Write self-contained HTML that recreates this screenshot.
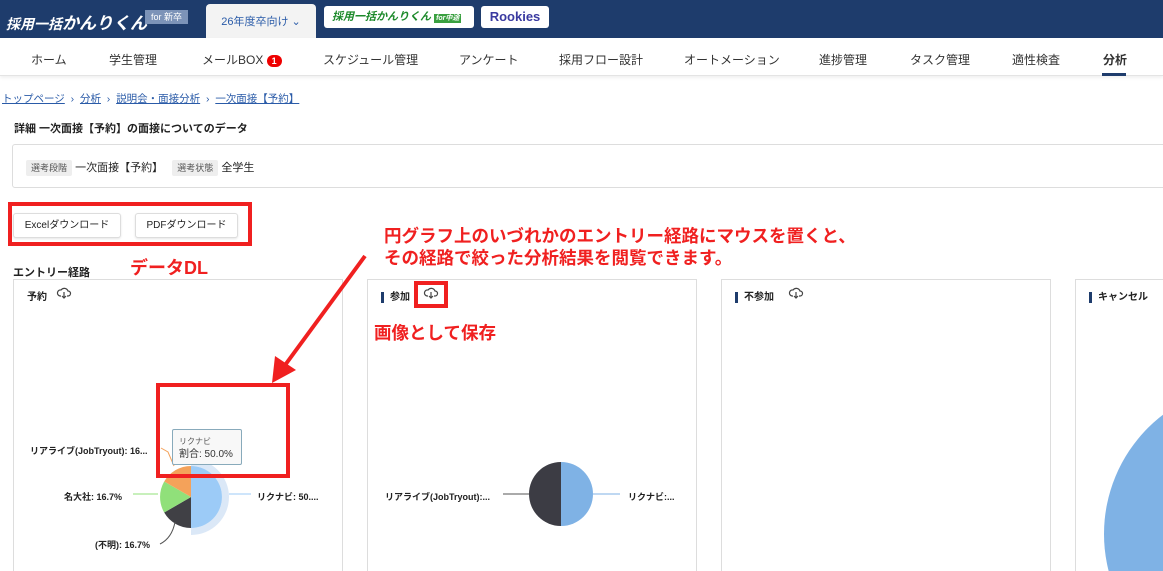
<!DOCTYPE html><html><head><meta charset="utf-8"><style>
*{box-sizing:border-box;margin:0;padding:0}
body{width:1163px;height:571px;overflow:hidden;background:#fff;font-family:"Liberation Sans","Noto Sans CJK JP",sans-serif;color:#222;position:relative}
.abs{position:absolute}
.hdr{left:0;top:0;width:1163px;height:38px;background:#1e3c6c}
.nav{left:0;top:38px;width:1163px;height:38px;background:#fff;border-bottom:1px solid #e4e4e4;box-shadow:0 2px 3px rgba(0,0,0,.06)}
.nav span{position:absolute;top:13px;font-size:12px;color:#333}
.card{border:1px solid #ddd;border-bottom:none;background:#fff}
.red{color:#f02020;font-weight:bold}
.btn{border:1px solid #ddd;border-radius:3px;font-size:10px;text-align:center;line-height:24px;background:#fff;box-shadow:0 1px 2px rgba(0,0,0,.1)}
.tag{background:#eee;font-size:9px;color:#555;padding:3px 5px;border-radius:2px}
.lbl{font-size:9px;font-weight:bold;color:#222}
</style></head><body>
<div class="abs hdr"></div>
<div class="abs" style="left:6px;top:9px;color:#fff;font-weight:bold;font-style:italic;font-size:14px;white-space:nowrap">採用一括<span style="font-size:17px">かんりくん</span></div>
<div class="abs" style="left:145px;top:10px;width:43px;height:14px;background:#7c93b8;color:#fff;font-size:9px;text-align:center;line-height:14px">for 新卒</div>
<div class="abs" style="left:206px;top:4px;width:110px;height:35px;background:#f3f3f3;border-radius:4px 4px 0 0;font-size:11px;color:#2a5ba8;text-align:center;line-height:36px">26年度卒向け ⌄</div>
<div class="abs" style="left:324px;top:6px;width:150px;height:22px;background:#fff;border-radius:3px;color:#1d8a2b;font-weight:bold;font-style:italic;font-size:11px;line-height:22px;padding-left:8px">採用一括かんりくん <span style="background:#3aa040;color:#fff;font-size:7px;padding:1px 2px">for中途</span></div>
<div class="abs" style="left:481px;top:6px;width:68px;height:22px;background:#fff;border-radius:3px;color:#3a3aa0;font-weight:bold;font-size:13px;text-align:center;line-height:22px">Rookies</div>
<div class="abs nav">
<span style="left:31px">ホーム</span><span style="left:109px">学生管理</span><span style="left:202px">メールBOX <b style="display:inline-block;width:15px;height:12px;border-radius:6px;background:#e00;color:#fff;font-size:9px;text-align:center;line-height:12px">1</b></span><span style="left:323px">スケジュール管理</span><span style="left:459px">アンケート</span><span style="left:559px">採用フロー設計</span><span style="left:684px">オートメーション</span><span style="left:819px">進捗管理</span><span style="left:910px">タスク管理</span><span style="left:1012px">適性検査</span><span style="left:1103px;font-weight:bold">分析</span>
<div class="abs" style="left:1102px;top:35px;width:24px;height:3px;background:#1e3c6c"></div>
</div>
<div class="abs" style="left:2px;top:91px;font-size:10.5px;color:#2a5ba8;white-space:nowrap"><u>トップページ</u> &nbsp;›&nbsp; <u>分析</u> &nbsp;›&nbsp; <u>説明会・面接分析</u> &nbsp;›&nbsp; <u>一次面接【予約】</u></div>
<div class="abs" style="left:14px;top:120px;font-size:11px;font-weight:bold">詳細 一次面接【予約】の面接についてのデータ</div>
<div class="abs" style="left:12px;top:144px;width:1160px;height:44px;border-radius:3px;border:1px solid #ddd"></div>
<div class="abs" style="left:26px;top:159px;font-size:11px"><span class="tag">選考段階</span> 一次面接【予約】 &nbsp; <span class="tag">選考状態</span> 全学生</div>
<div class="abs" style="left:8px;top:202px;width:244px;height:44px;border:4px solid #f02020"></div>
<div class="abs btn" style="left:13px;top:213px;width:108px;height:25px">Excelダウンロード</div>
<div class="abs btn" style="left:135px;top:213px;width:103px;height:25px">PDFダウンロード</div>
<div class="abs red" style="left:130px;top:254px;font-size:18px">データDL</div>
<div class="abs red" style="left:384px;top:225px;font-size:17.5px;line-height:22px;white-space:nowrap">円グラフ上のいづれかのエントリー経路にマウスを置くと、<br>その経路で絞った分析結果を閲覧できます。</div>
<div class="abs" style="left:13px;top:264px;font-size:11px;font-weight:bold">エントリー経路</div>
<div class="abs card" style="left:13px;top:279px;width:330px;height:292px"></div>
<div class="abs card" style="left:367px;top:279px;width:330px;height:292px"></div>
<div class="abs card" style="left:721px;top:279px;width:330px;height:292px"></div>
<div class="abs card" style="left:1075px;top:279px;width:88px;height:292px;overflow:hidden;border-right:none"><div class="abs" style="left:28px;top:104px;width:300px;height:300px;border-radius:50%;background:#7fb2e5"></div></div>
<div class="abs" style="left:27px;top:288px;font-size:10px;font-weight:bold">予約</div>
<div class="abs" style="left:381px;top:288px;font-size:10px;font-weight:bold"><span style="display:inline-block;width:3px;height:11px;background:#1e3c6c;vertical-align:middle;margin-right:6px"></span>参加</div>
<div class="abs" style="left:414px;top:281px;width:34px;height:27px;border:4px solid #f02020"></div>
<div class="abs" style="left:735px;top:288px;font-size:10px;font-weight:bold"><span style="display:inline-block;width:3px;height:11px;background:#1e3c6c;vertical-align:middle;margin-right:6px"></span>不参加</div>
<div class="abs" style="left:1089px;top:288px;font-size:10px;font-weight:bold"><span style="display:inline-block;width:3px;height:11px;background:#1e3c6c;vertical-align:middle;margin-right:6px"></span>キャンセル</div>
<div class="abs red" style="left:374px;top:320px;font-size:17.5px">画像として保存</div>
<svg class="abs" style="left:0;top:0" width="1163" height="571">
<defs><g id="cl" fill="none" stroke="#444" stroke-width="1.2"><path d="M-3,3 H-4 A3,3 0 0 1 -3,-3 A4,4 0 0 1 4,-2 A2.5,2.5 0 0 1 4,3 H3"/><path d="M0,-1 V5 M-2,3 L0,5 L2,3"/></g></defs>
<use href="#cl" x="64" y="293"/><use href="#cl" x="431" y="293"/><use href="#cl" x="796" y="293"/>
<line x1="365" y1="256" x2="280" y2="372" stroke="#f02020" stroke-width="4"/>
<polygon points="272,383 275,356 296,370" fill="#f02020"/>
<path d="M191,459 A38,38 0 0 1 191,535 L191,528 A31,31 0 0 0 191,466Z" fill="#dbe8f7"/>
<path d="M191,497 L191,466 A31,31 0 0 1 191,528Z" fill="#9ccbf7"/>
<path d="M191,497 L191,528 A31,31 0 0 1 164.2,512.5Z" fill="#404045"/>
<path d="M191,497 L164.2,512.5 A31,31 0 0 1 164.2,481.5Z" fill="#90e07a"/>
<path d="M191,497 L164.2,481.5 A31,31 0 0 1 191,466Z" fill="#f4a25a"/>
<line x1="229" y1="494" x2="251" y2="494" stroke="#9ccbf7"/>
<line x1="133" y1="494" x2="158" y2="494" stroke="#90e07a"/>
<path d="M175,522 Q172,538 160,544" fill="none" stroke="#555"/>
<path d="M161,448 L168,452 L174,466" fill="none" stroke="#f4a25a"/>
<path d="M561,462 A32,32 0 0 1 561,526Z" fill="#7fb2e5"/>
<path d="M561,462 A32,32 0 0 0 561,526Z" fill="#3c3c44"/>
<line x1="503" y1="494" x2="529" y2="494" stroke="#555"/>
<line x1="593" y1="494" x2="620" y2="494" stroke="#7fb2e5"/>
</svg>
<div class="abs" style="left:172px;top:429px;width:70px;height:36px;background:#f8f8f8;border:1px solid #8ab;border-radius:2px;font-size:8px;color:#555;padding:5px 6px;line-height:13px">リクナビ<br><span style="font-size:10px;color:#333">割合: 50.0%</span></div>
<div class="abs" style="left:156px;top:383px;width:134px;height:95px;border:4px solid #f02020"></div>
<div class="abs lbl" style="left:30px;top:444px">リアライブ(JobTryout): 16...</div>
<div class="abs lbl" style="left:64px;top:490px">名大社: 16.7%</div>
<div class="abs lbl" style="left:257px;top:490px">リクナビ: 50....</div>
<div class="abs lbl" style="left:95px;top:538px">(不明): 16.7%</div>
<div class="abs lbl" style="left:385px;top:490px">リアライブ(JobTryout):...</div>
<div class="abs lbl" style="left:628px;top:490px">リクナビ:...</div>
</body></html>
